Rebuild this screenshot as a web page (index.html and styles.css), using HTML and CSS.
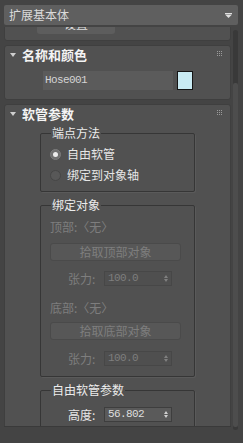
FILE: index.html
```html
<!DOCTYPE html>
<html lang="zh">
<head>
<meta charset="utf-8">
<link rel="stylesheet" href="styles.css">
</head>
<body>
<div class="app">
  <div class="dropdown">
    <span class="dd-text">扩展基本体</span>
    <svg class="dd-arrow" width="7" height="5" viewBox="0 0 7 5"><rect x="0" y="0" width="7" height="1" fill="#e0e0e0"/><polygon points="0,1.5 7,1.5 3.5,5" fill="#e0e0e0"/></svg>
  </div>
  <div class="main">
    <div class="viewport">
      <div class="scroll-content">
        <section class="panel panel-cut">
          <div class="btn set-btn">设置</div>
        </section>

        <section class="panel panel-name">
          <header class="phead">
            <span class="tri"></span>
            <span class="ptitle">名称和颜色</span>
            <span class="grip"><i></i><i></i><i></i><i></i><i></i><i></i><i></i><i></i><i></i></span>
          </header>
          <div class="name-row">
            <div class="name-input">Hose001</div>
            <div class="swatch"></div>
          </div>
        </section>

        <section class="panel panel-hose">
          <header class="phead">
            <span class="tri"></span>
            <span class="ptitle">软管参数</span>
            <span class="grip"><i></i><i></i><i></i><i></i><i></i><i></i><i></i><i></i><i></i></span>
          </header>

          <fieldset class="group g-end">
            <legend>端点方法</legend>
            <div class="radio-row"><span class="radio on"></span><span>自由软管</span></div>
            <div class="radio-row"><span class="radio"></span><span>绑定到对象轴</span></div>
          </fieldset>

          <fieldset class="group g-bind">
            <legend>绑定对象</legend>
            <div class="dim-label first">顶部:〈无〉</div>
            <div class="btn pick-btn">拾取顶部对象</div>
            <div class="spin-row">
              <span class="spin-label dim">张力:</span>
              <div class="spinner dis"><span>100.0</span><span class="arrows"><i class="up"></i><i class="down"></i></span></div>
            </div>
            <div class="dim-label second">底部:〈无〉</div>
            <div class="btn pick-btn pick2">拾取底部对象</div>
            <div class="spin-row row2">
              <span class="spin-label dim">张力:</span>
              <div class="spinner dis"><span>100.0</span><span class="arrows"><i class="up"></i><i class="down"></i></span></div>
            </div>
          </fieldset>

          <fieldset class="group g-free">
            <legend>自由软管参数</legend>
            <div class="spin-row">
              <span class="spin-label">高度:</span>
              <div class="spinner"><span>56.802</span><span class="arrows"><i class="up"></i><i class="down"></i></span></div>
            </div>
            <div class="spacer"></div>
          </fieldset>
        </section>
      </div>
    </div>
    <div class="scrollbar"><div class="thumb"></div></div>
  </div>
</div>
</body>
</html>
```
FILE: styles.css
```css
* { box-sizing: border-box; }
html, body {
  margin: 0;
  padding: 0;
  background: #444444;
  width: 243px;
  height: 443px;
  overflow: hidden;
  font-family: "Noto Sans CJK SC", "Noto Sans", sans-serif;
  font-size: 12px;
  color: #e2e2e2;
}
.app {
  padding: 5px 5px 0 4px;
  height: 443px;
}
.dropdown {
  height: 20px;
  background: #5f5f5f;
  border-radius: 2px;
  display: flex;
  align-items: center;
  justify-content: space-between;
  padding: 0 6px 0 5px;
  line-height: 20px;
  color: #dadada;
}
.dd-text { font-size: 12px; }
.dd-arrow { display: block; margin-top: 1px; }

.main {
  margin-top: 2px;
  height: 403px;
  display: flex;
}
.viewport {
  width: 227px;
  height: 400px;
  overflow: hidden;
  border-bottom: 1px solid #3a3a3a;
}
.scroll-content {
  margin-top: -26px;
  display: flex;
  flex-direction: column;
  gap: 4px;
}
.scrollbar {
  width: 5px;
  margin-left: 2px;
  margin-top: 3px;
  height: 400px;
  background: #393939;
  border-radius: 3px;
  padding-top: 53px;
  padding-bottom: 3px;
  display: flex;
}
.thumb {
  flex: 1;
  background: #4d4d4d;
  border-radius: 2px;
}

.panel {
  background: #515151;
  border: 1px solid #3f3f3f;
  border-radius: 3px;
}
.panel-cut {
  height: 40px;
  display: flex;
  align-items: flex-end;
  padding: 0 0 6px 32px;
}
.btn {
  background: #5d5d5d;
  border-radius: 3px;
  text-align: center;
  color: #dcdcdc;
}
.set-btn {
  width: 78px;
  height: 17px;
  line-height: 14px;
}

.phead {
  height: 17px;
  display: flex;
  align-items: center;
  padding-left: 5px;
  padding-right: 8px;
}
.tri {
  width: 0;
  height: 0;
  border-left: 3.5px solid transparent;
  border-right: 3.5px solid transparent;
  border-top: 4px solid #cfcfcf;
  margin-right: 6px;
  margin-top: 1px;
}
.ptitle {
  font-weight: bold;
  font-size: 13px;
  line-height: 17px;
  color: #f4f4f4;
  flex: 1;
}
.grip {
  display: grid;
  grid-template-columns: repeat(3, 1px);
  grid-template-rows: repeat(3, 1px);
  gap: 1px;
  margin-top: -3px;
}
.grip i {
  display: block;
  width: 1px;
  height: 1px;
  background: #9a9a9a;
}

.panel-name { padding-bottom: 9px; }
.name-row {
  margin-top: 8px;
  display: flex;
  padding-left: 38px;
  gap: 4px;
}
.name-input {
  width: 130px;
  height: 19px;
  background: #5b5b5b;
  font-family: "Liberation Mono", "DejaVu Sans Mono", monospace;
  font-size: 11px;
  letter-spacing: -0.6px;
  line-height: 19px;
  padding-left: 2px;
  color: #d4d4d4;
}
.swatch {
  width: 16px;
  height: 19px;
  background: #c9ebf3;
  border: 1px solid #151515;
}

.group {
  margin: 0 0 0 35px;
  width: 155px;
  padding: 0 0 0 9px;
  border: 1px solid #363636;
  border-radius: 2px;
  box-shadow: 1px 1px 0 #5a5a5a;
  min-width: 0;
}
.group legend {
  padding: 0 1px;
  margin-left: 1px;
  line-height: 14px;
  font-size: 12px;
  color: #ececec;
}
.g-end {
  margin-top: 4px;
  padding-top: 6px;
  padding-bottom: 8px;
}
.radio-row {
  height: 16px;
  display: flex;
  align-items: center;
  gap: 6px;
  line-height: 16px;
  color: #e6e6e6;
}
.radio-row + .radio-row { margin-top: 5px; }
.radio {
  width: 11px;
  height: 11px;
  border-radius: 50%;
  background: #585858;
  border: 1px solid #464646;
  display: flex;
  align-items: center;
  justify-content: center;
}
.radio.on {
  background: #707070;
  border-color: #7c7c7c;
}
.radio.on::after {
  content: "";
  width: 5px;
  height: 5px;
  border-radius: 50%;
  background: #ededed;
}

.g-bind {
  margin-top: 6px;
  padding-bottom: 10px;
}
.dim-label {
  line-height: 14px;
  height: 14px;
  color: #7e7e7e;
}
.dim-label.first { margin-top: 8px; }
.dim-label.second { margin-top: 15px; }
.pick-btn {
  width: 131px;
  height: 18px;
  line-height: 16px;
  margin-top: 9px;
  background: #575757;
  border: 1px solid #4a4a4a;
  color: #7e7e7e;
}
.pick-btn.pick2 { margin-top: 7px; }
.spin-row {
  margin-top: 10px;
  display: flex;
  align-items: center;
  padding-left: 18px;
  height: 15px;
}
.spin-row.row2 { margin-top: 11px; }
.spin-label {
  width: 36px;
  line-height: 15px;
  color: #e8e8e8;
}
.spin-label.dim { color: #7e7e7e; }
.spinner {
  width: 68px;
  height: 15px;
  background: #5a5a5a;
  border: 1px solid #3e3e3e;
  display: flex;
  align-items: center;
  justify-content: space-between;
  padding: 0 3px 0 3px;
  font-family: "Liberation Mono", "DejaVu Sans Mono", monospace;
  font-size: 11px;
  letter-spacing: -0.6px;
  line-height: 13px;
  color: #dedede;
}
.spinner.dis {
  background: #4f4f4f;
  border-color: #474747;
  color: #7e7e7e;
}
.arrows {
  display: flex;
  flex-direction: column;
  gap: 1px;
}
.arrows i {
  display: block;
  width: 0;
  height: 0;
  border-left: 2.5px solid transparent;
  border-right: 2.5px solid transparent;
}
.arrows .up { border-bottom: 3px solid #cfcfcf; }
.arrows .down { border-top: 3px solid #cfcfcf; }
.spinner.dis .arrows .up { border-bottom-color: #808080; }
.spinner.dis .arrows .down { border-top-color: #808080; }

.g-free {
  margin-top: 6px;
  padding-bottom: 10px;
}
.spacer { height: 30px; }
```
